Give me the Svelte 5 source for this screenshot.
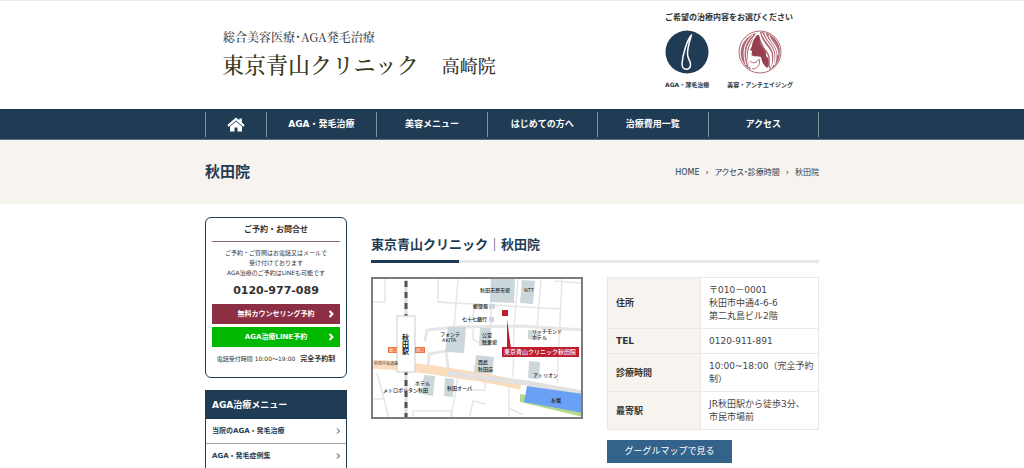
<script lang="ts">
  const navItems = ['AGA・発毛治療', '美容メニュー', 'はじめての方へ', '治療費用一覧', 'アクセス'];
  const menuItems = ['当院のAGA・発毛治療', 'AGA・発毛症例集'];
  const clinicInfo = [
    { label: '住所', lines: ['〒010－0001', '秋田市中通4-6-6', '第二丸島ビル2階'] },
    { label: 'TEL', lines: ['0120-911-891'] },
    { label: '診療時間', lines: ['10:00~18:00（完全予約制）'] },
    { label: '最寄駅', lines: ['JR秋田駅から徒歩3分、', '市民市場前'] },
  ];

  const roads = [
    'M2 25H14V2', 'M87 2L83 50', 'M67 2V25L190 32', 'M104 29L100 46', 'M67 25L80 26',
    'M147 2L143 50L142 100', 'M170 2L166 52', 'M191 2L186 106', 'M120 26V50', 'M184 4L210 6',
    'M2 122H13L18 142', 'M6 96L13 122', 'M42 142V134H80V142', 'M87 100L80 142', 'M98 142L102 124L114 127',
    'M138 106V142', 'M138 131L152 138', 'M95 113H114V103', 'M102 50V62L108 66', 'M143 77L157 79',
  ];
  const buildings = [
    '120,2 144,2 143,26 119,25', '151,3 164,4 162,27 149,26', '118,27 124,27 124,32 118,32',
    '118,40 123,40 123,45 118,45', '77,50 95,50 93,76 74,75', '109,51 120,51 119,69 108,69',
    '157,53 169,54 168,63 157,62', '105,78 123,80 121,97 103,95', '158,84 169,85 168,102 157,101',
    '53,98 64,99 62,119 51,117', '74,101 83,102 82,120 73,119',
  ];
  const mapLabels = [
    { x: 109, y: 15, text: '秋田市民市場' },
    { x: 153, y: 15, text: 'NTT' },
    { x: 102, y: 31, text: '郵便局' },
    { x: 91, y: 44, text: '七十七銀行' },
    { x: 69, y: 59, text: 'フォンテ' },
    { x: 71, y: 65, text: 'AKITA' },
    { x: 111, y: 60, text: '公営' },
    { x: 111, y: 67, text: '駐車場' },
    { x: 161, y: 56, text: 'リッチモンド' },
    { x: 161, y: 62, text: 'ホテル' },
    { x: 107, y: 87, text: '西武' },
    { x: 107, y: 94, text: '秋田店' },
    { x: 162, y: 100, text: 'アトリオン' },
    { x: 44, y: 108, text: 'ホテル' },
    { x: 12, y: 115, text: 'メトロポリタン秋田' },
    { x: 76, y: 113, text: '秋田オーパ' },
    { x: 180, y: 125, text: 'お堀' },
  ];
</script>

<div class="page">
  <header>
    <div class="container header-inner">
      <a class="logo" href="/">
        <span class="tagline">総合美容医療・AGA発毛治療</span>
        <span class="clinic-name">東京青山クリニック<span class="branch">高崎院</span></span>
      </a>
      <div class="treatments">
        <p>ご希望の治療内容をお選びください</p>
        <div class="treatment-links">
          <a href="#aga">
            <svg viewBox="0 0 44 44">
              <circle cx="22" cy="22" r="21.500" fill="#1f3c54" />
              <path d="M26.500 5C22 10 17.500 25 17 34C17 41 26 41 25.500 34C25 30 22.500 28 22.500 24C22.500 17 25 10 26.500 5Z" fill="none" stroke="#fff" stroke-width="1.500" stroke-linejoin="round" />
            </svg>
            <span>AGA・薄毛治療</span>
          </a>
          <a href="#beauty">
            <svg viewBox="0 0 44 44" fill="none">
              <circle cx="22" cy="22" r="21" stroke="#b06a75" />
              <path d="M18 3C6 7 0 18 4 30C6 35 9 38 13 40C9 32 9 23 12 15Z" fill="#b06a75" />
              <path d="M15 5C6 12 4 23 8 35M17 6C9 13 6 23 11 37" stroke="#fff" />
              <path d="M22 2C33 2 42 11 42 22C42 31 37 38 31 40C35 35 34 30 34 26C34 18 24 14 22 2Z" fill="#b06a75" />
              <path d="M24 3C27 13 36 16 36 26C36 31 36 34 33 38M27 3C29 12 38 15 38 25C38 30 38 32 36 35M31 5C32 12 40 15 40 25" stroke="#fff" stroke-width="1.200" />
              <path d="M19 5C16 9 14 12 14 16L12 20L14 21L13.500 25C15 27 20 26 23 27C24 31 24 34 29 38C33 35 32 29 28 26C29 20 23 14 21 5Z" fill="#98404f" />
              <path d="M22 11C23 19 31 21 31 28C31 32 30 35 32 38" stroke="#b06a75" stroke-width="1.500" />
              <path d="M12 31C15 34 19 33 21 29C23 35 19 39 14 39" stroke="#b06a75" />
            </svg>
            <span>美容・アンチエイジング</span>
          </a>
        </div>
      </div>
    </div>
  </header>

  <nav>
    <ul class="container">
      <li class="home">
        <a href="/" aria-label="HOME">
          <svg viewBox="0 0 18 15" fill="#fff">
            <path d="M9 0.500L0.300 8L1.700 9.700L9 3.500L16.300 9.700L17.700 8L14.800 5.500V1.500H12.300V3.300Z" />
            <path d="M9 4.400L3 9.500V14.500H7.500V10.500H10.500V14.500H15V9.500Z" />
          </svg>
        </a>
      </li>
      {#each navItems as item}
        <li><a href="#nav">{item}</a></li>
      {/each}
    </ul>
  </nav>

  <div class="title-bar">
    <div class="container title-inner">
      <h1>秋田院</h1>
      <div class="breadcrumb">
        <a href="/">HOME</a>
        <span>›</span>
        <a href="#access">アクセス・診療時間</a>
        <span>›</span>
        <span>秋田院</span>
      </div>
    </div>
  </div>

  <div class="container content">
    <aside>
      <section class="contact">
        <h2>ご予約・お問合せ</h2>
        <p>ご予約・ご質問はお電話又はメールで<br />受け付けております<br />AGA治療のご予約はLINEも可能です</p>
        <strong class="phone">0120-977-089</strong>
        <a class="btn" href="#counseling">
          無料カウンセリング予約
          <svg viewBox="0 0 6 8"><path d="M1.500 1L4.500 4L1.500 7" /></svg>
        </a>
        <a class="btn line" href="#line">
          AGA治療LINE予約
          <svg viewBox="0 0 6 8"><path d="M1.500 1L4.500 4L1.500 7" /></svg>
        </a>
        <div class="hours">電話受付時間 10:00～19:00 <b>完全予約制</b></div>
      </section>

      <section class="menu">
        <h2>AGA治療メニュー</h2>
        <ul>
          {#each menuItems as item}
            <li>
              <a href="#menu">
                {item}
                <svg viewBox="0 0 6 8"><path d="M2 1.500L4.500 4L2 6.500" /></svg>
              </a>
            </li>
          {/each}
        </ul>
      </section>
    </aside>

    <main>
      <h2>東京青山クリニック｜秋田院</h2>
      <div class="columns">
        <svg class="map" viewBox="0 0 212 142">
          <rect width="212" height="142" fill="#fff" />
          <g fill="none" stroke="#e6e6e6" stroke-width="1.500">
            {#each roads as d}
              <path {d} />
            {/each}
            <path d="M54 64L56 53L84 50L150 49L212 53" stroke-width="3" />
            <path d="M60 95L57 93L58 77L75 74L78 98" stroke-width="3" />
          </g>
          <path d="M0 87C50 89 75 96 110 100L150 108" fill="none" stroke="#fbdcbc" stroke-width="9" />
          <path d="M76 96L130 103L156 106L212 116" fill="none" stroke="#e3e1df" stroke-width="5" />
          {#each buildings as points}
            <polygon {points} fill="#ccd7dc" />
          {/each}
          <polygon points="149,117 212,130 212,140 149,125" fill="#b5d98a" />
          <polygon points="156,109 212,117 212,136 153,125" fill="#6aa1f5" />
          <path d="M35 3V142" stroke="#ddd" stroke-width="3" />
          <path d="M35 4V142" stroke="#555" stroke-width="3" stroke-dasharray="6 5" />
          <rect x="26" y="39" width="18" height="56" fill="#fff" stroke="#ccc" stroke-width="1" />
          <rect x="17" y="70" width="9" height="6" fill="#ec7038" />
          <rect x="44" y="70" width="10" height="6" fill="#ec7038" />
          <g class="exit">
            <text x="18" y="75">東口</text>
            <text x="45" y="75">西口</text>
          </g>
          <g class="station">
            <text x="31" y="63">秋</text>
            <text x="31" y="70">田</text>
            <text x="31" y="77">駅</text>
          </g>
          <text class="road-name" x="3" y="88">秋田中央道路</text>
          {#each mapLabels as label}
            <text class="label" x={label.x} y={label.y}>{label.text}</text>
          {/each}
          <rect x="131" y="33" width="6" height="6" fill="#be1e2d" />
          <path d="M136 42L136 72H140Z" fill="#be1e2d" />
          <rect x="131" y="70" width="77" height="10" fill="#be1e2d" />
          <text class="here" x="169" y="77">東京青山クリニック秋田院</text>
          <rect x="1" y="1" width="210" height="140" fill="none" stroke="#7c7c7c" stroke-width="2" />
        </svg>

        <div class="info">
          <table>
            <tbody>
              {#each clinicInfo as row}
                <tr>
                  <th scope="row">{row.label}</th>
                  <td>
                    {#each row.lines as line}
                      <div>{line}</div>
                    {/each}
                  </td>
                </tr>
              {/each}
            </tbody>
          </table>
          <a class="map-btn" href="#map">グーグルマップで見る</a>
        </div>
      </div>
    </main>
  </div>
</div>

<style>
  :global(body) {
    margin: 0;
    background: #fff;
  }
  .page {
    height: 100vh;
    overflow: hidden;
    box-sizing: border-box;
    border-top: 1px solid #ebebeb;
    font-family: "DejaVu Sans", "Noto Sans CJK JP", sans-serif;
    font-size: 9px;
    line-height: 13px;
    color: #333;
  }
  .container {
    width: 100%;
    max-width: 614px;
    margin: 0 auto;
  }
  a {
    color: inherit;
    text-decoration: none;
  }
  h1, h2, p, ul {
    margin: 0;
    padding: 0;
  }
  ul {
    list-style: none;
  }

  .header-inner {
    display: flex;
    justify-content: space-between;
    height: 108px;
  }
  .logo {
    display: flex;
    flex-direction: column;
    padding: 26px 0 0 17px;
    font-family: "Noto Serif CJK JP", "Liberation Serif", "Noto Sans CJK JP", serif;
    font-weight: 500;
    color: #3b3a1c;
  }
  .tagline {
    font-size: 12px;
    line-height: 20px;
    font-feature-settings: "palt";
    color: #444;
    padding-left: 1px;
  }
  .clinic-name {
    font-size: 22px;
    line-height: 34px;
  }
  .branch {
    margin-left: 23px;
    font-size: 18px;
    color: #333;
  }
  .treatments {
    padding: 10px 26px 0 0;
    font-weight: bold;
  }
  .treatments p {
    font-size: 8px;
    text-align: center;
  }
  .treatment-links {
    display: flex;
    gap: 18px;
    margin-top: 6px;
  }
  .treatment-links a {
    display: flex;
    flex-direction: column;
    align-items: center;
    gap: 4px;
    font-size: 6px;
  }
  .treatment-links svg {
    width: 44px;
    height: 44px;
  }

  nav {
    background: #1f3c54;
    border-bottom: 1px solid #57707f;
  }
  nav ul {
    display: flex;
    padding: 3px 0 2px;
  }
  nav li {
    flex: 110;
    border-right: 1px solid #8393a0;
  }
  nav .home {
    flex: 60;
    border-left: 1px solid #8393a0;
  }
  nav a {
    display: flex;
    align-items: center;
    justify-content: center;
    height: 25px;
    color: #fff;
    font-weight: bold;
  }
  nav svg {
    width: 18px;
    height: 15px;
  }

  .title-bar {
    background: #f7f3ef;
  }
  .title-inner {
    display: flex;
    align-items: center;
    justify-content: space-between;
    height: 64px;
    color: #1f3c54;
  }
  h1 {
    font-size: 15px;
    line-height: 20px;
  }
  .breadcrumb {
    display: flex;
    gap: 6px;
    font-size: 8px;
    font-feature-settings: "palt";
  }

  .content {
    display: flex;
    gap: 24px;
    padding-top: 13px;
  }
  aside {
    flex: 0 0 142px;
  }
  .contact {
    display: flex;
    flex-direction: column;
    padding: 5px 6px 11px;
    border: 1px solid #1f3c54;
    border-radius: 6px;
    text-align: center;
  }
  .contact h2 {
    padding-bottom: 4px;
    border-bottom: 1px solid #8a6a70;
    font-size: 8px;
    line-height: 14px;
  }
  .contact p {
    margin-top: 6px;
    font-size: 6px;
    line-height: 10px;
  }
  .phone {
    margin: 6px 0;
    font-size: 11px;
    line-height: 14px;
  }
  .btn {
    display: grid;
    grid-template-columns: 18px 1fr 18px;
    align-items: center;
    justify-items: center;
    height: 20px;
    margin-bottom: 3px;
    background: #8c2f45;
    color: #fff;
    font-size: 7px;
    font-weight: bold;
    white-space: nowrap;
  }
  .btn::before {
    content: "";
  }
  .btn.line {
    background: #00b900;
  }
  .btn svg, .menu svg {
    width: 6px;
    height: 8px;
    fill: none;
    stroke: #fff;
    stroke-width: 2;
  }
  .hours {
    margin-top: 2px;
    font-size: 6px;
    white-space: nowrap;
  }
  .hours b {
    margin-left: 3px;
    font-size: 7px;
  }

  .menu {
    margin-top: 12px;
    border: 1px solid #1f3c54;
    color: #1f3c54;
  }
  .menu h2 {
    padding: 0 6px;
    background: #1f3c54;
    color: #fff;
    font-size: 9px;
    line-height: 28px;
  }
  .menu li {
    border-bottom: 1px solid #9eabb5;
  }
  .menu a {
    display: flex;
    align-items: center;
    justify-content: space-between;
    height: 24px;
    padding: 0 5px 0 6px;
    font-size: 7px;
    font-weight: bold;
  }
  .menu svg {
    stroke: #1f3c54;
    stroke-width: 1;
  }

  main {
    flex: 1;
    padding-top: 18px;
  }
  main h2 {
    padding-bottom: 5px;
    border-bottom: 3px solid;
    border-image: linear-gradient(to right, #1f3c54 90px, #e6e7e8 90px) 3;
    font-size: 13px;
    line-height: 20px;
    color: #1f3c54;
  }
  .columns {
    display: grid;
    grid-template-columns: 1fr 1fr;
    align-items: start;
    gap: 24px;
    margin-top: 14px;
  }
  .map {
    display: block;
    width: 100%;
  }
  .label {
    font-size: 5px;
    font-weight: 500;
    fill: #222;
  }
  .station {
    font-size: 7px;
    font-weight: bold;
    fill: #222;
  }
  .exit {
    font-size: 4px;
    fill: #fff;
  }
  .road-name {
    font-size: 4px;
    fill: #444;
  }
  .here {
    font-size: 6px;
    font-weight: 500;
    fill: #fff;
    text-anchor: middle;
  }

  table {
    width: 100%;
    border-collapse: collapse;
  }
  th, td {
    padding: 6px 0 5px 8px;
    border: 1px solid #ebe8e6;
    text-align: left;
  }
  td {
    color: #444;
  }
  th {
    width: 84px;
    background: #f7f3ef;
  }
  .map-btn {
    display: block;
    width: 125px;
    margin-top: 10px;
    background: #33638a;
    color: #fff;
    line-height: 23px;
    text-align: center;
  }
</style>
